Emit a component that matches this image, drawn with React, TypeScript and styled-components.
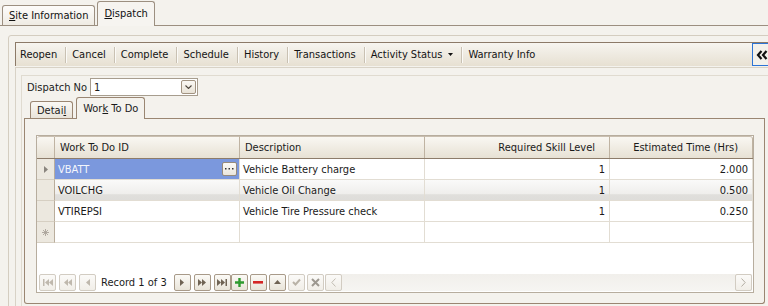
import styled, { createGlobalStyle } from 'styled-components';

const GlobalStyle = createGlobalStyle`
  html, body {
    margin: 0;
    padding: 0;
    background: #f4f2ed;
  }
  body {
    font-family: "DejaVu Sans Condensed", "Liberation Sans", sans-serif;
    font-size: 11px;
    color: #1b1b1b;
  }
`;

const Screen = styled.div`
  width: 768px;
  height: 306px;
  overflow: hidden;
  background: #f4f2ed;
`;

/* ---------- top tab strip ---------- */

const TopTabs = styled.div`
  display: flex;
  align-items: flex-end;
  height: 25px;
  padding-left: 2px;
  border-bottom: 1px solid #9c8f80;
`;

const TopTab = styled.div<{ $active?: boolean }>`
  display: flex;
  align-items: center;
  box-sizing: border-box;
  height: ${(p) => (p.$active ? '25px' : '20px')};
  margin-bottom: ${(p) => (p.$active ? '-1px' : '0')};
  margin-left: ${(p) => (p.$active ? '2px' : '0')};
  padding: ${(p) => (p.$active ? '0 6px 2px' : '0 6px')};
  border: 1px solid #9c8f80;
  border-bottom: none;
  border-radius: 3px 3px 0 0;
  background: ${(p) =>
    p.$active ? '#f6f4f0' : 'linear-gradient(#fdfcfa, #efebe3)'};
  color: #111;
  white-space: nowrap;
`;

const TabBody = styled.div`
  padding: 9px 0 0 8px;
`;

const GroupBox = styled.div`
  box-sizing: border-box;
  width: 800px;
  height: 330px;
  padding: 6px 0 0 6px;
  border: 1px solid #d4cdc0;
  border-radius: 3px;
`;

/* ---------- toolbar ---------- */

const Toolbar = styled.div`
  display: flex;
  align-items: center;
  box-sizing: border-box;
  width: 757px;
  height: 24px;
  border-top: 1px solid #8c7a68;
  border-left: 1px solid #8c7a68;
  background: linear-gradient(#f7f5f0 0%, #efebe2 45%, #e7e0d2 100%);
`;

const ToolItem = styled.div<{ $first?: boolean }>`
  display: flex;
  align-items: center;
  gap: 6px;
  padding: 0 8px 0 ${(p) => (p.$first ? '4px' : '5px')};
  color: #141414;
  white-space: nowrap;
`;

const ToolSep = styled.div`
  width: 1px;
  height: 16px;
  background: #c9c1b3;
  border-right: 1px solid #fbfaf7;
`;

const ToolSpacer = styled.div`
  flex: 1;
`;

const CollapseButton = styled.div`
  display: flex;
  align-items: center;
  box-sizing: border-box;
  width: 20px;
  height: 23px;
  padding-left: 3px;
  border: 1px solid #2c74d6;
  background: #f3f1eb;
`;

/* ---------- nested panels ---------- */

const PanelOuter = styled.div`
  margin-top: 1px;
  padding: 7px 0 0 5px;
  border-top: 1px solid #d8d2c6;
  border-left: 1px solid #d8d2c6;
`;

const PanelInner = styled.div`
  padding: 2px 0 0 1px;
  border-top: 1px solid #e0dbd0;
  border-left: 1px solid #e0dbd0;
  height: 240px;
`;

const DispatchRow = styled.div`
  display: flex;
  align-items: center;
  height: 18px;
  padding-left: 4px;
  gap: 3px;
`;

const Combo = styled.div`
  display: flex;
  align-items: center;
  justify-content: space-between;
  box-sizing: border-box;
  width: 108px;
  height: 18px;
  padding: 0 1px 0 3px;
  border: 1px solid #a79d8e;
  background: #fff;
`;

const ComboButton = styled.div`
  display: flex;
  align-items: center;
  justify-content: center;
  box-sizing: border-box;
  width: 15px;
  height: 14px;
  border: 1px solid #a19381;
  border-radius: 2px;
  background: linear-gradient(#faf8f4, #e9e3d7);
`;

/* ---------- inner tabs ---------- */

const TabRow = styled.div`
  display: flex;
  align-items: flex-end;
  box-sizing: border-box;
  width: 741px;
  height: 22px;
  margin: 1px 0 0 1px;
  padding-left: 6px;
  border-bottom: 1px solid #9a8672;
  gap: 3px;
`;

const InnerTab = styled.div<{ $active?: boolean }>`
  display: flex;
  align-items: center;
  box-sizing: border-box;
  height: ${(p) => (p.$active ? '22px' : '17px')};
  margin-bottom: ${(p) => (p.$active ? '-1px' : '0')};
  padding: ${(p) => (p.$active ? '0 6px 1px' : '0 6px')};
  border: 1px solid #9a8672;
  border-bottom: none;
  border-radius: 3px 3px 0 0;
  background: ${(p) =>
    p.$active ? '#f4f2ed' : 'linear-gradient(#faf8f4, #e9e4da)'};
  white-space: nowrap;
`;

const TabPanel = styled.div`
  box-sizing: border-box;
  width: 741px;
  height: 185px;
  margin-left: 1px;
  padding: 16px 0 0 11px;
  border: 1px solid #9a8672;
  border-top: none;
  border-radius: 0 0 3px 3px;
`;

/* ---------- grid ---------- */

const COLS = '18px 185px 185px 185px 143px';

const Grid = styled.div`
  display: flex;
  flex-direction: column;
  box-sizing: border-box;
  width: 718px;
  height: 158px;
  border: 1px solid #b7ad9e;
  background: #fff;
`;

const HeaderRow = styled.div`
  display: grid;
  grid-template-columns: ${COLS};
  height: 22px;
  border-bottom: 1px solid #8d7c6a;
`;

const HeadCell = styled.div<{ $right?: boolean; $corner?: 'left' | 'right' }>`
  display: flex;
  align-items: center;
  justify-content: ${(p) => (p.$right ? 'flex-end' : 'flex-start')};
  padding: ${(p) => (p.$right ? '0 14px 0 0' : '0 0 0 5px')};
  border-right: 1px solid #bfb3a2;
  border-top: 1px solid #c9bfb0;
  border-radius: ${(p) =>
    p.$corner === 'left' ? '3px 0 0 0' : p.$corner === 'right' ? '0 3px 0 0' : '0'};
  background: linear-gradient(#f9f7f2 0%, #f0ece3 50%, #e7e1d4 100%);
  color: #1a1a1a;
  white-space: nowrap;
`;

const Row = styled.div<{ $hover?: boolean }>`
  display: grid;
  grid-template-columns: ${COLS};
  height: 21px;
  background: ${(p) =>
    p.$hover
      ? 'linear-gradient(#fafaf9 0%, #efeeec 66%, #e0dfdc 70%, #dedcd9 100%)'
      : '#fff'};
`;

const RowHead = styled.div`
  display: flex;
  align-items: center;
  justify-content: center;
  background: #ece8df;
  border-right: 1px solid #b9ad9c;
  border-bottom: 1px solid #d6cfc2;
`;

const Cell = styled.div<{ $right?: boolean; $selected?: boolean }>`
  display: flex;
  align-items: center;
  justify-content: ${(p) => (p.$right ? 'flex-end' : 'space-between')};
  padding: ${(p) => (p.$right ? '0 4px 0 0' : '0 2px 0 3px')};
  border-right: 1px solid #e2ddd3;
  border-bottom: 1px solid #e2ddd3;
  background: ${(p) => (p.$selected ? '#7b98dd' : 'transparent')};
  color: ${(p) => (p.$selected ? '#f4f6fc' : '#1a1a1a')};
  white-space: nowrap;
`;

const EllipsisButton = styled.div`
  display: flex;
  align-items: center;
  justify-content: center;
  box-sizing: border-box;
  width: 15px;
  height: 14px;
  border: 1px solid #978b7b;
  border-radius: 2px;
  background: linear-gradient(#fbfaf7, #ebe6dc);
`;

const GridFill = styled.div`
  flex: 1;
`;

/* ---------- navigator ---------- */

const NavBar = styled.div`
  display: flex;
  align-items: center;
  height: 18px;
  margin-bottom: 1px;
  padding-left: 2px;
`;

const NavGroup = styled.div<{ $gap: number }>`
  display: flex;
  gap: ${(p) => p.$gap}px;
`;

const NavButton = styled.div<{ $disabled?: boolean }>`
  display: flex;
  align-items: center;
  justify-content: center;
  box-sizing: border-box;
  width: 17px;
  height: 17px;
  border: 1px solid ${(p) => (p.$disabled ? '#d2ccc2' : '#a89a89')};
  border-radius: 2px;
  background: ${(p) =>
    p.$disabled ? 'linear-gradient(#fbfaf8, #f1eee8)' : 'linear-gradient(#fbfaf6, #e9e4d9)'};
`;

const RecordText = styled.div`
  margin: 0 7px 0 5px;
  white-space: nowrap;
`;

const HScroll = styled.div`
  flex: 1;
  display: flex;
  margin: 0 1px 0 1px;
  background: linear-gradient(#f1efeb, #f6f5f2);
`;

const Track = styled.div`
  flex: 1;
`;

/* ---------- icons ---------- */

const EN = '#6f6354';
const DIS = '#bfb8ad';

const Tri = ({ dir, color }: { dir: 'l' | 'r' | 'u'; color: string }) => {
  const d = dir === 'l' ? 'M4 0L0 3.5L4 7Z' : dir === 'r' ? 'M0 0L4 3.5L0 7Z' : 'M3.5 0L7 4L0 4Z';
  return (
    <svg width={dir === 'u' ? 7 : 4} height={dir === 'u' ? 4 : 7} viewBox={dir === 'u' ? '0 0 7 4' : '0 0 4 7'}>
      <path d={d} fill={color} />
    </svg>
  );
};

const Double = ({ dir, color, bar }: { dir: 'l' | 'r'; color: string; bar?: boolean }) => (
  <svg width={bar ? 10 : 8} height={7} viewBox={bar ? '0 0 10 7' : '0 0 8 7'}>
    {dir === 'l' ? (
      <g fill={color}>
        {bar && <rect x={0} y={0} width={1.5} height={7} />}
        <path d={bar ? 'M6 0L2 3.5L6 7Z' : 'M4 0L0 3.5L4 7Z'} />
        <path d={bar ? 'M10 0L6 3.5L10 7Z' : 'M8 0L4 3.5L8 7Z'} />
      </g>
    ) : (
      <g fill={color}>
        <path d="M0 0L4 3.5L0 7Z" />
        <path d="M4 0L8 3.5L4 7Z" />
        {bar && <rect x={8.5} y={0} width={1.5} height={7} />}
      </g>
    )}
  </svg>
);

const Plus = () => (
  <svg width="9" height="9" viewBox="0 0 9 9">
    <path d="M4.5 0V9M0 4.5H9" stroke="#2f9a2f" strokeWidth="2.4" />
  </svg>
);

const Minus = () => (
  <svg width="10" height="3" viewBox="0 0 10 3">
    <rect x="0" y="0" width="10" height="2.6" fill="#d42525" />
  </svg>
);

const Check = () => (
  <svg width="9" height="8" viewBox="0 0 9 8">
    <path d="M1 4L3.5 6.5L8 1.5" fill="none" stroke="#b9b2a7" strokeWidth="2" />
  </svg>
);

const Cross = () => (
  <svg width="9" height="9" viewBox="0 0 9 9">
    <path d="M1 1L8 8M8 1L1 8" stroke="#9d9890" strokeWidth="2" />
  </svg>
);

const Chevron = ({ dir, color }: { dir: 'l' | 'r'; color: string }) => (
  <svg width="5" height="9" viewBox="0 0 5 9">
    <path d={dir === 'l' ? 'M4.5 0.5L0.8 4.5L4.5 8.5' : 'M0.5 0.5L4.2 4.5L0.5 8.5'} fill="none" stroke={color} strokeWidth="1" />
  </svg>
);

const DoubleChevronLeft = () => (
  <svg width="14" height="10" viewBox="0 0 14 10">
    <path d="M5.5 1L2 5L5.5 9M10.5 1L7 5L10.5 9" fill="none" stroke="#111" strokeWidth="2.2" />
  </svg>
);

const ComboArrow = () => (
  <svg width="7" height="4" viewBox="0 0 7 4">
    <path d="M0.5 0.5L3.5 3.5L6.5 0.5" fill="none" stroke="#4d463e" strokeWidth="1.1" />
  </svg>
);

const DropArrow = () => (
  <svg width="5" height="3" viewBox="0 0 5 3">
    <path d="M0 0H5L2.5 3Z" fill="#111" />
  </svg>
);

const NewRowMark = () => (
  <svg width="7" height="7" viewBox="0 0 7 7">
    <path d="M3.5 0V7M0 3.5H7M1 1L6 6M6 1L1 6" stroke="#aaa39a" strokeWidth="0.9" />
  </svg>
);

const Dots = () => (
  <svg width="9" height="2" viewBox="0 0 9 2">
    <g fill="#333">
      <rect x="0" y="0" width="1.5" height="1.5" />
      <rect x="3.5" y="0" width="1.5" height="1.5" />
      <rect x="7" y="0" width="1.5" height="1.5" />
    </g>
  </svg>
);

/* ---------- data ---------- */

const tools = ['Reopen', 'Cancel', 'Complete', 'Schedule', 'History', 'Transactions', 'Activity Status', 'Warranty Info'];

const rows = [
  { id: 'VBATT', desc: 'Vehicle Battery charge', skill: '1', time: '2.000' },
  { id: 'VOILCHG', desc: 'Vehicle Oil Change', skill: '1', time: '0.500' },
  { id: 'VTIREPSI', desc: 'Vehicle Tire Pressure check', skill: '1', time: '0.250' },
];

export default function App() {
  return (
    <Screen>
      <GlobalStyle />
      <TopTabs>
        <TopTab>
          <span>
            <u>S</u>ite Information
          </span>
        </TopTab>
        <TopTab $active>
          <span>
            <u>D</u>ispatch
          </span>
        </TopTab>
      </TopTabs>
      <TabBody>
        <GroupBox>
          <Toolbar>
            {tools.map((t, i) => (
              <>
                {i > 0 && <ToolSep key={`s${i}`} />}
                <ToolItem key={t} $first={i === 0}>
                  {t}
                  {t === 'Activity Status' && <DropArrow />}
                </ToolItem>
              </>
            ))}
            <ToolSpacer />
            <CollapseButton>
              <DoubleChevronLeft />
            </CollapseButton>
          </Toolbar>
          <PanelOuter>
            <PanelInner>
              <DispatchRow>
                <span>Dispatch No</span>
                <Combo>
                  <span>1</span>
                  <ComboButton>
                    <ComboArrow />
                  </ComboButton>
                </Combo>
              </DispatchRow>
              <TabRow>
                <InnerTab>
                  <span>
                    Detai<u>l</u>
                  </span>
                </InnerTab>
                <InnerTab $active>
                  <span>
                    Wor<u>k</u> To Do
                  </span>
                </InnerTab>
              </TabRow>
              <TabPanel>
                <Grid>
                  <HeaderRow>
                    <HeadCell $corner="left" />
                    <HeadCell>Work To Do ID</HeadCell>
                    <HeadCell>Description</HeadCell>
                    <HeadCell $right>Required Skill Level</HeadCell>
                    <HeadCell $right $corner="right">
                      Estimated Time (Hrs)
                    </HeadCell>
                  </HeaderRow>
                  {rows.map((r, i) => (
                    <Row key={r.id} $hover={i === 1}>
                      <RowHead>{i === 0 && <Tri dir="r" color="#8a857e" />}</RowHead>
                      <Cell $selected={i === 0}>
                        <span>{r.id}</span>
                        {i === 0 && (
                          <EllipsisButton>
                            <Dots />
                          </EllipsisButton>
                        )}
                      </Cell>
                      <Cell>{r.desc}</Cell>
                      <Cell $right>{r.skill}</Cell>
                      <Cell $right>{r.time}</Cell>
                    </Row>
                  ))}
                  <Row>
                    <RowHead>
                      <NewRowMark />
                    </RowHead>
                    <Cell />
                    <Cell />
                    <Cell />
                    <Cell />
                  </Row>
                  <GridFill />
                  <NavBar>
                    <NavGroup $gap={3}>
                      <NavButton $disabled>
                        <Double dir="l" bar color={DIS} />
                      </NavButton>
                      <NavButton $disabled>
                        <Double dir="l" color={DIS} />
                      </NavButton>
                      <NavButton $disabled>
                        <Tri dir="l" color={DIS} />
                      </NavButton>
                    </NavGroup>
                    <RecordText>Record 1 of 3</RecordText>
                    <NavGroup $gap={3}>
                      <NavButton>
                        <Tri dir="r" color={EN} />
                      </NavButton>
                      <NavButton>
                        <Double dir="r" color={EN} />
                      </NavButton>
                      <NavButton>
                        <Double dir="r" bar color={EN} />
                      </NavButton>
                    </NavGroup>
                    <NavGroup $gap={2}>
                      <NavButton>
                        <Plus />
                      </NavButton>
                      <NavButton>
                        <Minus />
                      </NavButton>
                      <NavButton>
                        <Tri dir="u" color={EN} />
                      </NavButton>
                      <NavButton $disabled>
                        <Check />
                      </NavButton>
                      <NavButton $disabled>
                        <Cross />
                      </NavButton>
                    </NavGroup>
                    <HScroll>
                      <NavButton $disabled>
                        <Chevron dir="l" color="#c2bcb2" />
                      </NavButton>
                      <Track />
                      <NavButton $disabled>
                        <Chevron dir="r" color="#b3ada3" />
                      </NavButton>
                    </HScroll>
                  </NavBar>
                </Grid>
              </TabPanel>
            </PanelInner>
          </PanelOuter>
        </GroupBox>
      </TabBody>
    </Screen>
  );
}
